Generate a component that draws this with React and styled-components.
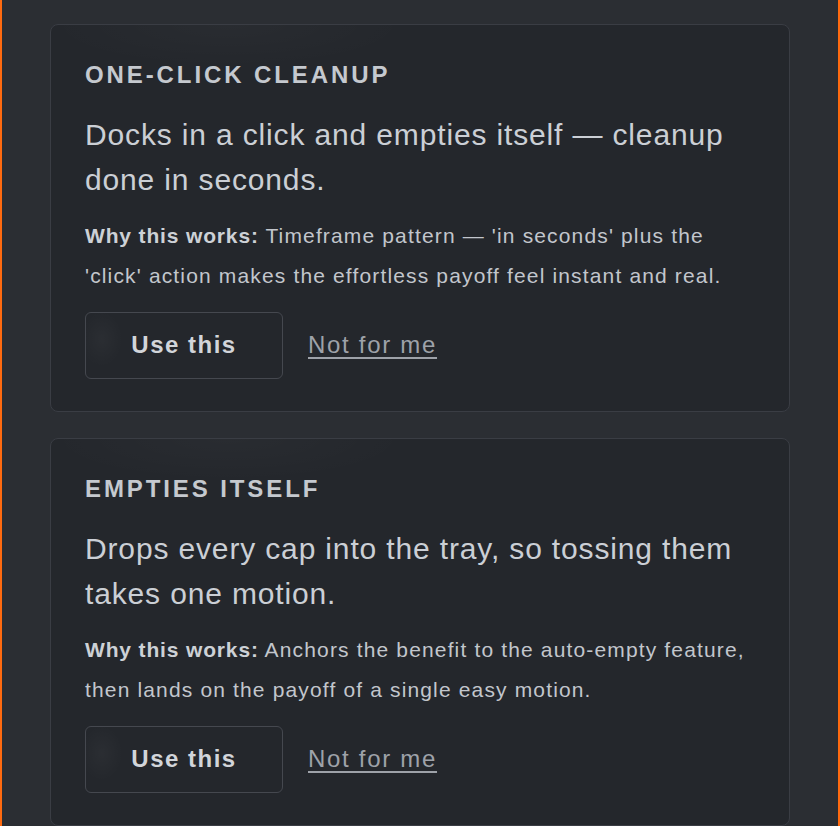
import React from "react";
import styled, { createGlobalStyle } from "styled-components";

const GlobalStyle = createGlobalStyle`
  html, body {
    margin: 0;
    padding: 0;
    background: #2b2e33;
  }
  body {
    font-family: "Liberation Sans", Arial, sans-serif;
    -webkit-font-smoothing: antialiased;
  }
`;

const Frame = styled.div`
  box-sizing: border-box;
  min-height: 826px;
  width: 840px;
  border-left: 2px solid #ff6a10;
  border-right: 2px solid #ff6a10;
  background: #2b2e33;
  padding: 24px 48px 40px;
  display: flex;
  flex-direction: column;
  gap: 26px;
`;

const Card = styled.section`
  box-sizing: border-box;
  background: #24272c;
  border: 1px solid #3a3d44;
  border-radius: 8px;
  padding: 36px 34px 32px 34px;
  display: flex;
  flex-direction: column;
  background-image: radial-gradient(
    ellipse 260px 60px at 24% 0%,
    rgba(255, 255, 255, 0.025),
    transparent 70%
  );
`;

const Label = styled.h3`
  margin: 0;
  font-size: 24px;
  line-height: 28.8px;
  font-weight: 700;
  letter-spacing: 2.9px;
  color: #c5c9cf;
  text-transform: uppercase;
`;

const Headline = styled.p`
  margin: 22px 0 0;
  font-size: 30px;
  line-height: 45px;
  letter-spacing: 0.85px;
  color: #cbcfd5;
`;

const Reason = styled.p`
  margin: 14px 0 0;
  font-size: 21px;
  line-height: 40px;
  letter-spacing: 1.15px;
  color: #c2c6cc;

  strong {
    color: #cdd1d6;
    font-weight: 700;
    letter-spacing: 0.85px;
  }
`;

const Actions = styled.div`
  margin-top: 16px;
  display: flex;
  align-items: center;
  gap: 25px;
`;

const UseButton = styled.button`
  box-sizing: border-box;
  width: 198px;
  height: 67px;
  background: transparent;
  border: 1px solid #45484f;
  border-radius: 6px;
  font-family: inherit;
  font-size: 24px;
  font-weight: 700;
  letter-spacing: 1.5px;
  color: #d2d5da;
  cursor: pointer;
  background-image: radial-gradient(
    ellipse 30px 40px at 8% 40%,
    rgba(255, 255, 255, 0.03),
    transparent 70%
  );
`;

const SkipLink = styled.a`
  font-size: 24px;
  letter-spacing: 1.7px;
  color: #9ea2a9;
  text-decoration: underline;
  text-underline-offset: 4px;
  text-decoration-thickness: 1.5px;
  cursor: pointer;
`;

const items = [
  {
    label: "One-click cleanup",
    headline: "Docks in a click and empties itself — cleanup done in seconds.",
    reason:
      "Timeframe pattern — 'in seconds' plus the 'click' action makes the effortless payoff feel instant and real.",
  },
  {
    label: "Empties itself",
    headline: "Drops every cap into the tray, so tossing them takes one motion.",
    reason:
      "Anchors the benefit to the auto-empty feature, then lands on the payoff of a single easy motion.",
  },
];

export default function App() {
  return (
    <>
      <GlobalStyle />
      <Frame>
        {items.map((it) => (
          <Card key={it.label}>
            <Label>{it.label}</Label>
            <Headline>{it.headline}</Headline>
            <Reason>
              <strong>Why this works:</strong> {it.reason}
            </Reason>
            <Actions>
              <UseButton>Use this</UseButton>
              <SkipLink>Not for me</SkipLink>
            </Actions>
          </Card>
        ))}
      </Frame>
    </>
  );
}
